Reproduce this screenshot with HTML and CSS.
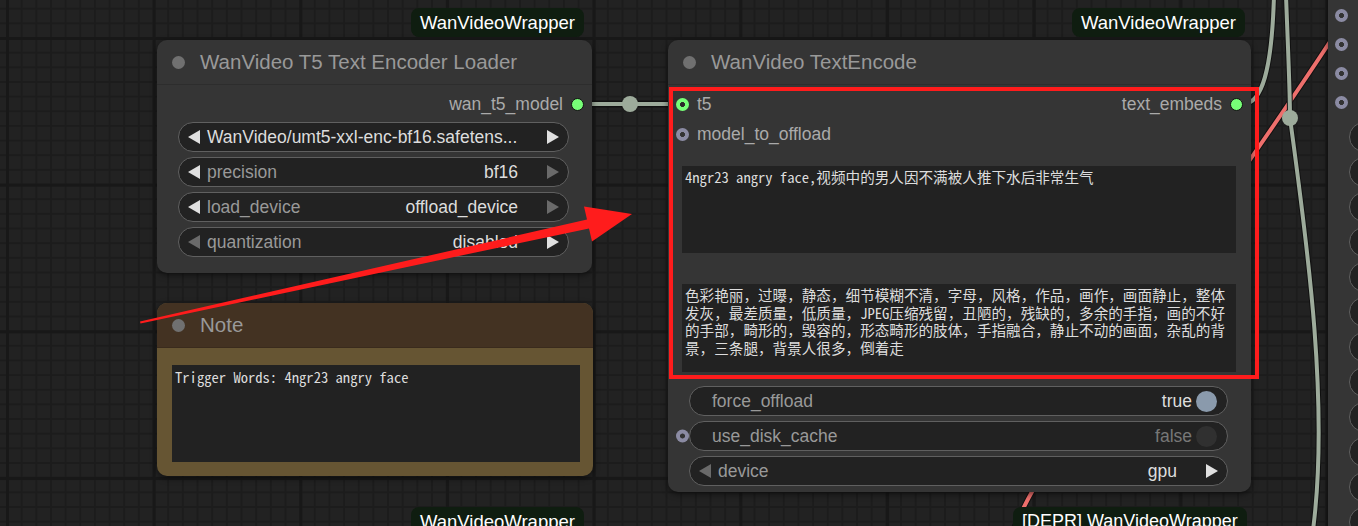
FILE: index.html
```html
<!DOCTYPE html>
<html lang="zh-CN">
<head>
    <meta charset="UTF-8">
    <title>WanVideo Workflow</title>
    <link rel="stylesheet" href="styles.css">
</head>
<body>
<div class="canvas">

    <svg class="wires" width="1358" height="526" viewBox="0 0 1358 526">
        <g fill="none" stroke-linecap="round">
            <path d="M590 104 L670 104" stroke="#111" stroke-width="7"/>
            <path d="M590 104 L670 104" stroke="#9dab9b" stroke-width="4"/>
            <path d="M1345 18 C1290 110, 1060 420, 1015 526" stroke="#111" stroke-width="6"/>
            <path d="M1345 18 C1290 110, 1060 420, 1015 526" stroke="#ee6f6c" stroke-width="4"/>
            <path d="M1243 104 C1262 104, 1272 70, 1274 -5" stroke="#111" stroke-width="6"/>
            <path d="M1243 104 C1262 104, 1272 70, 1274 -5" stroke="#9dab9b" stroke-width="4"/>
            <path d="M1286 -5 C1288 50, 1290 90, 1290 118 C1305 230, 1330 400, 1313 530" stroke="#111" stroke-width="6"/>
            <path d="M1286 -5 C1288 50, 1290 90, 1290 118 C1305 230, 1330 400, 1313 530" stroke="#9dab9b" stroke-width="4"/>
        </g>
        <circle cx="630" cy="104" r="8" fill="#9dab9b"/>
        <circle cx="1290" cy="118" r="8" fill="#9dab9b"/>
    </svg>

    <div class="badge badge-loader">WanVideoWrapper</div>
    <div class="badge badge-encode">WanVideoWrapper</div>
    <div class="badge badge-low-left">WanVideoWrapper</div>
    <div class="badge badge-low-right">[DEPR] WanVideoWrapper</div>

    <!-- T5 loader -->
    <div class="node node-loader">
        <div class="node-title"><span class="title-dot"></span>WanVideo T5 Text Encoder Loader</div>
        <div class="node-body">
            <div class="slot-row slot-out">wan_t5_model<span class="slot slot-green"></span></div>
            <div class="widgets widgets-loader">
                <div class="widget">
                    <svg class="arrow" viewBox="0 0 14 16"><polygon points="13,1 13,15 1,8" fill="#e0e0e0"/></svg>
                    <span class="label label-value">WanVideo/umt5-xxl-enc-bf16.safetens...</span>
                    <svg class="arrow arrow-right arrow-push" viewBox="0 0 14 16"><polygon points="1,1 1,15 13,8" fill="#e0e0e0"/></svg>
                </div>
                <div class="widget">
                    <svg class="arrow" viewBox="0 0 14 16"><polygon points="13,1 13,15 1,8" fill="#e0e0e0"/></svg>
                    <span class="label">precision</span>
                    <span class="value">bf16</span>
                    <svg class="arrow arrow-right" viewBox="0 0 14 16"><polygon points="1,1 1,15 13,8" fill="#6a6a6a"/></svg>
                </div>
                <div class="widget">
                    <svg class="arrow" viewBox="0 0 14 16"><polygon points="13,1 13,15 1,8" fill="#e0e0e0"/></svg>
                    <span class="label">load_device</span>
                    <span class="value">offload_device</span>
                    <svg class="arrow arrow-right" viewBox="0 0 14 16"><polygon points="1,1 1,15 13,8" fill="#6a6a6a"/></svg>
                </div>
                <div class="widget">
                    <svg class="arrow" viewBox="0 0 14 16"><polygon points="13,1 13,15 1,8" fill="#6a6a6a"/></svg>
                    <span class="label">quantization</span>
                    <span class="value">disabled</span>
                    <svg class="arrow arrow-right" viewBox="0 0 14 16"><polygon points="1,1 1,15 13,8" fill="#e0e0e0"/></svg>
                </div>
            </div>
        </div>
    </div>

    <!-- note -->
    <div class="node node-note">
        <div class="node-title note-title"><span class="title-dot"></span>Note</div>
        <div class="note-body">
            <div class="note-text">Trigger Words: 4ngr23 angry face</div>
        </div>
    </div>

    <!-- text encode -->
    <div class="node node-encode">
        <div class="node-title"><span class="title-dot"></span>WanVideo TextEncode</div>
        <div class="node-body">
            <div class="slot-row slot-in">
                <span class="slot slot-linked"></span><span>t5</span>
                <span class="slot-out-inline">text_embeds<span class="slot slot-green"></span></span>
            </div>
            <div class="slot-row slot-in"><span class="slot slot-gray"></span><span>model_to_offload</span></div>
            <div class="text-box text-positive">4ngr23 angry face,视频中的男人因不满被人推下水后非常生气</div>
            <div class="text-box text-negative">色彩艳丽，过曝，静态，细节模糊不清，字母，风格，作品，画作，画面静止，整体发灰，最差质量，低质量，JPEG压缩残留，丑陋的，残缺的，多余的手指，画的不好的手部，畸形的，毁容的，形态畸形的肢体，手指融合，静止不动的画面，杂乱的背景，三条腿，背景人很多，倒着走</div>
            <div class="widgets widgets-encode">
                <div class="widget widget-toggle">
                    <span class="label">force_offload</span>
                    <span class="value">true</span>
                    <span class="toggle toggle-on"></span>
                </div>
                <div class="widget widget-toggle">
                    <span class="slot slot-gray slot-side"></span>
                    <span class="label">use_disk_cache</span>
                    <span class="value value-off">false</span>
                    <span class="toggle toggle-off"></span>
                </div>
                <div class="widget">
                    <svg class="arrow" viewBox="0 0 14 16"><polygon points="13,1 13,15 1,8" fill="#6a6a6a"/></svg>
                    <span class="label">device</span>
                    <span class="value">gpu</span>
                    <svg class="arrow arrow-right" viewBox="0 0 14 16"><polygon points="1,1 1,15 13,8" fill="#e0e0e0"/></svg>
                </div>
            </div>
        </div>
    </div>

    <!-- node cut off at the right edge -->
    <div class="node node-edge">
        <div class="edge-slots">
            <span class="slot slot-gray"></span>
            <span class="slot slot-gray"></span>
            <span class="slot slot-gray"></span>
            <span class="slot slot-gray"></span>
        </div>
        <div class="edge-widgets">
            <div class="widget"></div><div class="widget"></div><div class="widget"></div>
            <div class="widget"></div><div class="widget"></div><div class="widget"></div>
            <div class="widget"></div><div class="widget"></div><div class="widget"></div>
            <div class="widget"></div><div class="widget"></div><div class="widget"></div>
        </div>
    </div>

    <div class="highlight"></div>

    <svg class="marks" width="1358" height="526" viewBox="0 0 1358 526">
        <polygon points="140,321.5 587,219.6 584,206.4 632,214 592,241.6 589,228.4 140.5,323.5" fill="#ff1c1c"/>
    </svg>
</div>
</body>
</html>
```

FILE: styles.css
```css
* {
    margin: 0;
    padding: 0;
    box-sizing: border-box;
}

body {
    width: 1358px;
    height: 526px;
    overflow: hidden;
    background: #222;
    font-family: "Liberation Sans", Arial, sans-serif;
}

.canvas {
    position: relative;
    width: 1358px;
    height: 526px;
    overflow: hidden;
    background-color: #222;
    background-image:
        linear-gradient(90deg, #181818 0 3px, transparent 3px),
        linear-gradient(180deg, #181818 0 3px, transparent 3px),
        linear-gradient(90deg, #1c1c1c 0 2px, transparent 2px),
        linear-gradient(180deg, #1c1c1c 0 2px, transparent 2px);
    background-size: 146.7px 146.7px, 146.7px 146.7px, 14.67px 14.67px, 14.67px 14.67px;
    background-position: 6px 37px;
}

.wires {
    position: absolute;
    left: 0;
    top: 0;
    z-index: 0;
}

.marks {
    position: absolute;
    left: 0;
    top: 0;
    z-index: 4;
}

/* badges */
.badge {
    position: absolute;
    z-index: 2;
    height: 29px;
    padding: 0 9px;
    display: flex;
    align-items: center;
    background: #0f1d10;
    color: #fff;
    font-size: 18.5px;
    border-radius: 8px;
    white-space: nowrap;
}

.badge-loader { left: 411px; top: 8px; }
.badge-encode { left: 1072px; top: 8px; }
.badge-low-left { left: 411px; top: 507px; }
.badge-low-right { left: 1013px; top: 507px; font-size: 18px; }

/* nodes */
.node {
    position: absolute;
    z-index: 1;
    background: #353535;
    border-radius: 10px;
    box-shadow: 0 2px 6px rgba(0, 0, 0, 0.55);
    display: flex;
    flex-direction: column;
}

.node-loader { left: 157px; top: 40px; width: 435px; }
.node-encode { left: 668px; top: 40px; width: 583px; }
.node-note { left: 157px; top: 303px; width: 436px; height: 173px; background: #665533; overflow: hidden; }
.node-edge { left: 1328px; top: -20px; width: 60px; height: 580px; border-radius: 0; }

.node-title {
    height: 45px;
    flex-shrink: 0;
    display: flex;
    align-items: center;
    gap: 15px;
    padding-left: 15px;
    font-size: 20.5px;
    color: #999;
    border-bottom: 1px solid #2d2d2d;
}

.title-dot {
    width: 13px;
    height: 13px;
    border-radius: 50%;
    background: #707070;
}

.node-body {
    display: flex;
    flex-direction: column;
    padding-top: 4px;
}

.node-loader .node-body { padding-bottom: 16px; }
.node-encode .node-body { padding-bottom: 6px; }

/* slots */
.slot-row {
    height: 30px;
    display: flex;
    align-items: center;
    font-size: 17.5px;
    color: #aaa;
}

.slot-in {
    padding-left: 8px;
    gap: 8px;
}

.slot-out {
    justify-content: flex-end;
    padding-right: 8px;
    gap: 8px;
}

.slot-out-inline {
    margin-left: auto;
    padding-right: 8px;
    display: flex;
    align-items: center;
    gap: 8px;
}

.slot {
    width: 13px;
    height: 13px;
    border-radius: 50%;
    flex-shrink: 0;
}

.slot-green {
    background: #77ff77;
    border: 1px solid #111;
}

.slot-linked {
    background: radial-gradient(circle, #2a2a2a 0 2.2px, #77ff77 2.8px);
}

.slot-gray {
    background: radial-gradient(circle, #333 0 2.2px, #8b8ba3 2.8px);
}

.slot-side {
    position: absolute;
    left: -14px;
    top: 50%;
    transform: translateY(-50%);
}

/* widgets */
.widgets {
    display: flex;
    flex-direction: column;
    gap: 5px;
    padding: 0 23px 0 21px;
}

.widgets-loader { margin-top: 3px; }
.widgets-encode { margin-top: 14px; }

.widget {
    position: relative;
    height: 30px;
    border: 1px solid #606060;
    border-radius: 15px;
    background: #222;
    display: flex;
    align-items: center;
    padding: 0 8px;
    font-size: 17.5px;
    white-space: nowrap;
}

.widget .label {
    color: #999;
    margin-left: 6px;
}

.widget .label-value {
    color: #ddd;
}

.widget .value {
    margin-left: auto;
    color: #ddd;
}

.widget .value-off {
    color: #777;
}

.arrow {
    width: 14px;
    height: 16px;
    flex-shrink: 0;
}

.arrow-right {
    margin-left: 28px;
}

.arrow-push {
    margin-left: auto;
}

.widget-toggle {
    padding: 0 10px 0 16px;
}

.toggle {
    width: 21px;
    height: 21px;
    border-radius: 50%;
    margin-left: 4px;
}

.toggle-on { background: #8a9aac; }
.toggle-off { background: #303030; }

/* prompt boxes */
.text-box {
    margin: 0 15px 0 14px;
    padding: 2px 3px;
    background: #222;
    color: #ddd;
    font-family: "Noto Sans Mono CJK SC", "Noto Sans CJK SC", monospace;
    font-size: 14.6px;
    line-height: 17.5px;
    overflow: hidden;
    word-break: break-all;
}

.text-positive {
    margin-top: 17px;
    height: 87px;
}

.text-negative {
    margin-top: 31px;
    height: 88px;
}

/* note */
.note-title {
    background: #433222;
    border-bottom: 1px solid #3a2b1d;
}

.note-body {
    padding: 17px 13px 14px 15px;
    flex: 1;
    display: flex;
}

.note-text {
    flex: 1;
    background: #222;
    color: #ddd;
    padding: 3px 3px;
    font-family: "Noto Sans Mono CJK SC", "Liberation Mono", monospace;
    font-size: 14.6px;
    line-height: 17.5px;
}

/* edge node */
.edge-slots {
    display: flex;
    flex-direction: column;
    padding: 21px 0 0 7px;
}

.edge-slots .slot {
    margin: 8px 0;
}

.edge-widgets {
    display: flex;
    flex-direction: column;
    gap: 5px;
    margin-top: 5px;
    padding-left: 21px;
}

.edge-widgets .widget {
    width: 100px;
    flex-shrink: 0;
}

/* red annotation box */
.highlight {
    position: absolute;
    z-index: 3;
    left: 669px;
    top: 87px;
    width: 590px;
    height: 292px;
    border: 4px solid #ff1c1c;
}
```
